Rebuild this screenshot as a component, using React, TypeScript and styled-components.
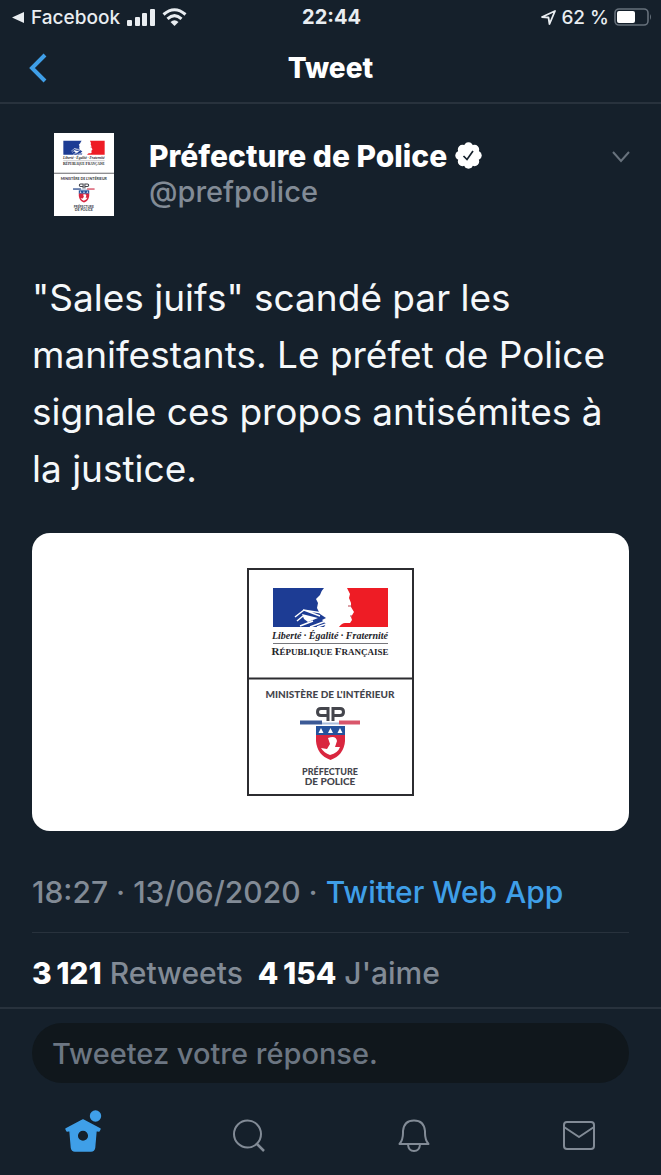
import React from "react";
import styled, { createGlobalStyle } from "styled-components";

const ink = "#15202b";
const line = "#28323d";
const muted = "#828b96";
const blue = "#3f9fe8";
const sans = `Inter, "Liberation Sans", sans-serif`;

const GlobalStyle = createGlobalStyle`
  *, *::before, *::after { box-sizing: border-box; }
  body { margin: 0; background: ${ink}; color: #fff; font-family: ${sans}; }
  button, input { font: inherit; color: inherit; }
`;

const Page = styled.div`
  min-height: 100vh;
  display: flex;
  flex-direction: column;
  background: ${ink};
`;

const StatusBar = styled.div`
  display: grid;
  grid-template-columns: 1fr auto 1fr;
  align-items: center;
  height: 34px;
  padding: 0 9px 0 11px;
  font-size: 19px;
  font-weight: 500;
  color: #e9edf1;
`;

const StatusGroup = styled.div<{ $end?: boolean }>`
  display: flex;
  align-items: center;
  justify-content: ${(p) => (p.$end ? "flex-end" : "flex-start")};
  gap: ${(p) => (p.$end ? 5 : 7)}px;
`;

const Clock = styled.time`
  font-size: 20px;
  font-weight: 700;
`;

const NavBar = styled.header`
  display: grid;
  grid-template-columns: 1fr auto 1fr;
  align-items: center;
  height: 70px;
  padding: 0 28px;
  border-bottom: 2px solid ${line};
`;

const IconButton = styled.button<{ $color?: string }>`
  display: flex;
  justify-self: start;
  padding: 0;
  border: 0;
  background: none;
  color: ${(p) => p.$color ?? muted};
  cursor: pointer;
`;

const Title = styled.h1`
  margin: 0;
  font-size: 28px;
  font-weight: 800;
`;

const Tweet = styled.main`
  flex: 1;
  padding: 29px 32px 0;
`;

const Author = styled.div`
  display: flex;
  align-items: flex-start;
  height: 83px;
  padding-left: 22px;
`;

const Avatar = styled.div`
  width: 60px;
  height: 83px;
  flex: none;
  background: #fff;
`;

const Names = styled.div`
  flex: 1;
  padding: 4px 0 0 35px;
`;

const NameRow = styled.div`
  display: flex;
  align-items: center;
  gap: 8px;
  height: 37px;
`;

const Name = styled.strong`
  font-size: 30px;
  font-weight: 800;
`;

const Handle = styled.div`
  font-size: 29px;
  font-weight: 500;
  line-height: 36px;
  color: ${muted};
`;

const Caret = styled(IconButton)`
  padding: 18px 0 0;
  margin-right: -2px;
`;

const Body = styled.p`
  margin: 53px 0 36px;
  font-size: 37px;
  line-height: 57px;
  color: #f5f8fa;
`;

const Media = styled.figure`
  display: flex;
  justify-content: center;
  margin: 0;
  padding: 35px 0;
  border-radius: 18px;
  background: #fff;
`;

const Meta = styled.div`
  padding: 40px 0 19px;
  border-bottom: 1px solid ${line};
  font-size: 30px;
  font-weight: 500;
  line-height: 42px;
  color: ${muted};
`;

const SourceLink = styled.a`
  color: ${blue};
  text-decoration: none;
`;

const Stats = styled.div`
  display: flex;
  gap: 15px;
  padding: 20px 0 14px;
  font-size: 30px;
  font-weight: 500;
  line-height: 40px;
  color: ${muted};
`;

const Count = styled.strong`
  color: #fff;
  font-weight: 800;
`;

const ReplyBar = styled.form`
  padding: 14px 32px 8px;
  border-top: 2px solid ${line};
`;

const ReplyInput = styled.input`
  display: block;
  width: 100%;
  height: 60px;
  padding: 0 20px;
  border: 0;
  border-radius: 30px;
  outline: none;
  background: #10171c;
  font-size: 29px;
  font-weight: 500;
  &::placeholder { color: #6c7682; opacity: 1; }
`;

const Tabs = styled.nav`
  display: grid;
  grid-template-columns: repeat(4, 1fr);
  height: 84px;
  padding: 15px 0 0 2px;
`;

const Tab = styled.button<{ $active?: boolean }>`
  display: flex;
  justify-content: center;
  align-items: flex-start;
  padding: 0;
  border: 0;
  background: none;
  color: ${(p) => (p.$active ? blue : muted)};
  cursor: pointer;
`;

const Emblem = ({ framed, width, height }: { framed?: boolean; width: number; height: number }) => (
  <svg width={width} height={height} viewBox="0 0 167 228" role="img" aria-label="Préfecture de Police" fill="none">
    <path d="M0 110.500H167" stroke="#2c2c30" strokeWidth="2" />
    {framed && <rect x="1" y="1" width="165" height="226" stroke="#2c2c30" strokeWidth="2" />}
    <path d="M26 20H77Q74 23 73 27L69 31L71 35L70 40L73 46L79 50L75 52L79 56L77 59H26Z" fill="#1d3c94" />
    <path d="M48 49L57 42L73 48M56 42L75 45M50 53L56 48M53 58L66 53M63 59L79 53M70 59L79 56" stroke="#fff" strokeWidth="1.500" />
    <path d="M55 46L71 50L61 54L57 51Z" fill="#fff" />
    <path d="M100 20H141V59H92Q95 55 98 55H103L105 52L104 49L107 44L104 39V35L102 30L103 26Z" fill="#ee1c25" />
    <path d="M101 38H105M103 48H105" stroke="#b8404c" strokeWidth="1" />
    <g textAnchor="middle" fill="#24242a">
      <text x="83" y="71" fontFamily="Liberation Serif, serif" fontStyle="italic" fontWeight="700" fontSize="10">Liberté · Égalité · Fraternité</text>
      <text x="83" y="87" fontFamily="Liberation Serif, serif" fontWeight="700" fontSize="11">R<tspan fontSize="9">ÉPUBLIQUE </tspan>F<tspan fontSize="9">RANÇAISE</tspan></text>
    </g>
    <path d="M26 75.500H141" stroke="#77777c" strokeWidth="1" />
    <g textAnchor="middle" fill="#44454c" fontFamily="Lato, sans-serif" fontWeight="900">
      <text x="83" y="130" fontSize="10">MINISTÈRE DE L'INTÉRIEUR</text>
      <text x="83" y="207" fontSize="9">PRÉFECTURE</text>
      <text x="83" y="217" fontSize="10">DE POLICE</text>
    </g>
    <path d="M81 153V140.500H74Q70.500 140.500 70.500 144T74 147.500H81M86 153V140.500H93Q96.500 140.500 96.500 144T93 147.500H86" stroke="#44454c" strokeWidth="3" />
    <path d="M53 154.500H75" stroke="#3c5a96" strokeWidth="4" />
    <path d="M92 154.500H113" stroke="#d9566b" strokeWidth="4" />
    <path d="M75 155.500H92" stroke="#a9bddc" strokeWidth="2" />
    <path d="M69 166H98V173Q97 187 83.500 192Q70 187 69 173Z" fill="#d9263f" />
    <path d="M69 158H98V167H69Z" fill="#24529c" />
    <path d="M71.500 165L74 160L76.500 165ZM81 165L83.500 160L86 165ZM90.500 165L93 160L95.500 165Z" fill="#fff" />
    <path d="M81 170Q89 167 90 173L88 179L93 179Q91 185 83 187Q77 185 74 180L80 181L83 176Z" fill="#fff" />
  </svg>
);

const BackToApp = () => (
  <svg width="13" height="13" viewBox="0 0 13 13" fill="currentColor" aria-hidden="true"><path d="M1 6.500L13 1V12Z" /></svg>
);

const Signal = () => (
  <svg width="28" height="18" viewBox="0 0 28 18" fill="currentColor" aria-hidden="true">
    <rect x="0" y="12" width="5" height="6" rx="1" /><rect x="8" y="9" width="5" height="9" rx="1" />
    <rect x="15" y="5" width="5" height="13" rx="1" /><rect x="23" y="1" width="5" height="17" rx="1" />
  </svg>
);

const Wifi = () => (
  <svg width="25" height="18" viewBox="0 0 25 18" fill="none" stroke="currentColor" strokeWidth="3" aria-hidden="true">
    <path d="M1.500 6.500Q12.500 -3 23.500 6.500M5.500 10.800Q12.500 4.500 19.500 10.800" />
    <path d="M8.500 14Q12.500 10.500 16.500 14L12.500 18Z" fill="currentColor" stroke="none" />
  </svg>
);

const Location = () => (
  <svg width="15" height="15" viewBox="0 0 15 15" fill="none" stroke="currentColor" strokeWidth="1.800" strokeLinejoin="round" aria-hidden="true">
    <path d="M1 7L14 1L8.500 14L7.500 7.500Z" />
  </svg>
);

const Battery = () => (
  <svg width="38" height="18" viewBox="0 0 38 18" fill="none" aria-hidden="true">
    <rect x="1" y="1" width="33" height="16" rx="4" stroke="#66707b" strokeWidth="1.600" />
    <rect x="3" y="3" width="18" height="12" rx="2" fill="#fff" />
    <path d="M36 6Q38 9 36 12Z" fill="#66707b" />
  </svg>
);

const Verified = () => (
  <svg width="27" height="27" viewBox="0 0 27 27" aria-label="Compte vérifié" role="img">
    <g fill="#fff">
      <circle cx="13.500" cy="13.500" r="10.500" />
      {[0, 45, 90, 135, 180, 225, 270, 315].map((a) => (
        <circle key={a} cx="13.500" cy="5" r="4.700" transform={`rotate(${a} 13.500 13.500)`} />
      ))}
    </g>
    <path d="M8.500 14L12 17.500L18 9" fill="none" stroke={ink} strokeWidth="1.700" />
  </svg>
);

export default function App() {
  return (
    <Page>
      <GlobalStyle />
      <StatusBar>
        <StatusGroup>
          <BackToApp />
          <span>Facebook</span>
          <Signal />
          <Wifi />
        </StatusGroup>
        <Clock>22:44</Clock>
        <StatusGroup $end>
          <Location />
          <span>62 %</span>
          <Battery />
        </StatusGroup>
      </StatusBar>
      <NavBar>
        <IconButton $color={blue} aria-label="Retour">
          <svg width="20" height="30" viewBox="0 0 20 30" fill="none" stroke="currentColor" strokeWidth="4"><path d="M17 2L4 15L17 28" /></svg>
        </IconButton>
        <Title>Tweet</Title>
      </NavBar>
      <Tweet>
        <Author>
          <Avatar><Emblem width={60} height={83} /></Avatar>
          <Names>
            <NameRow>
              <Name>Préfecture de Police</Name>
              <Verified />
            </NameRow>
            <Handle>@prefpolice</Handle>
          </Names>
          <Caret aria-label="Plus d'options">
            <svg width="20" height="12" viewBox="0 0 20 12" fill="none" stroke="#68727d" strokeWidth="2"><path d="M2 1L10 10L18 1" /></svg>
          </Caret>
        </Author>
        <Body>"Sales juifs" scandé par les manifestants. Le préfet de Police signale ces propos antisémites à la justice.</Body>
        <Media><Emblem framed width={167} height={228} /></Media>
        <Meta>
          18:27 · 13/06/2020 · <SourceLink href="#source">Twitter Web App</SourceLink>
        </Meta>
        <Stats>
          <span><Count>3&#8201;121</Count> Retweets</span>
          <span><Count>4&#8201;154</Count> J'aime</span>
        </Stats>
      </Tweet>
      <ReplyBar>
        <ReplyInput type="text" aria-label="Votre réponse" placeholder="Tweetez votre réponse." />
      </ReplyBar>
      <Tabs>
        <Tab $active aria-label="Accueil">
          <svg width="38" height="47" viewBox="1 1 38 47" fill="currentColor">
            <circle cx="31.500" cy="11" r="5.700" />
            <path fillRule="evenodd" stroke="currentColor" strokeWidth="1.500" strokeLinejoin="round" d="M19 15L36 24L35 26L32 25.500L30.500 43Q30 46 27 46H11Q8 46 7.500 43L6 25.500L3 26L2 24ZM19 25A5.800 5.800 0 1 0 19 36.600A5.800 5.800 0 1 0 19 25Z" />
          </svg>
        </Tab>
        <Tab aria-label="Rechercher">
          <svg width="34" height="48" viewBox="0 0 34 48" fill="none" stroke="currentColor" strokeWidth="2"><circle cx="15.500" cy="28" r="13.500" /><path d="M25 38L32 45" strokeWidth="2.500" /></svg>
        </Tab>
        <Tab aria-label="Notifications">
          <svg width="32" height="48" viewBox="0 0 32 48" fill="none" stroke="currentColor" strokeWidth="2" strokeLinejoin="round"><path d="M1.500 38Q5 34 5 27V25Q6 14.500 16 14.500T27 25V27Q27 34 30.500 38ZM10 38.500Q10.500 45 16 45T22 38.500" /></svg>
        </Tab>
        <Tab aria-label="Messages">
          <svg width="34" height="48" viewBox="0 0 34 48" fill="none" stroke="currentColor" strokeWidth="2" strokeLinejoin="round"><rect x="2" y="16" width="30" height="27" rx="3" /><path d="M2 21L17 31L32 21" /></svg>
        </Tab>
      </Tabs>
    </Page>
  );
}
